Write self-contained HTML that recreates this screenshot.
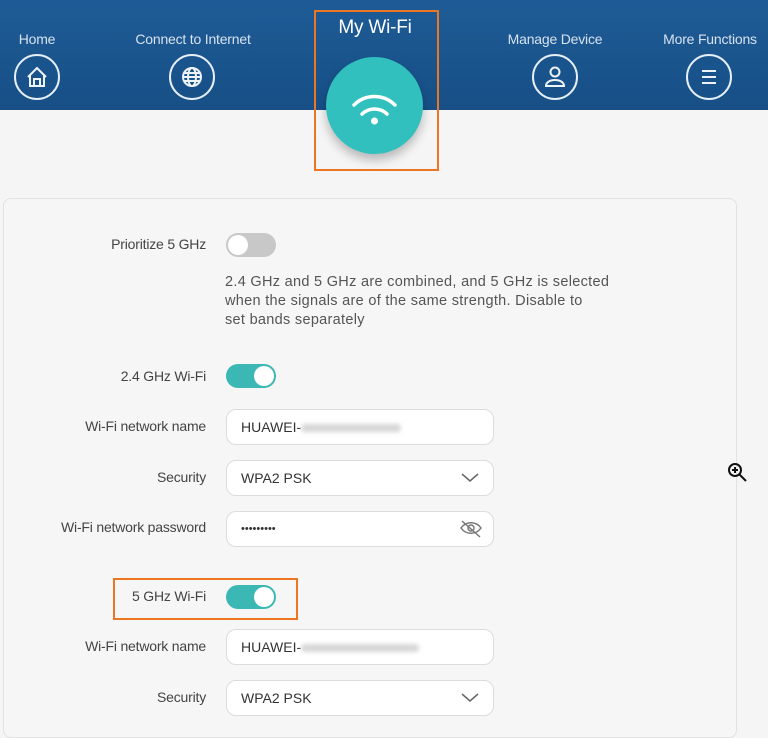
<!DOCTYPE html>
<html><head><style>
*{margin:0;padding:0;box-sizing:border-box}
body{width:768px;height:718px;overflow:hidden;background:#f5f5f5;font-family:"Liberation Sans",sans-serif;position:relative;color:#333}
.hdr{position:absolute;left:0;top:0;width:768px;height:110px;background:linear-gradient(180deg,#1e5b96 0%,#174f86 100%)}
.nl{position:absolute;top:31px;color:#d6e2ee;font-size:14px;white-space:nowrap;transform:translateX(-50%);letter-spacing:-0.2px}
.ni{position:absolute;top:54px;width:46px;height:46px;border:2px solid #e6eef6;border-radius:50%;transform:translateX(-50%)}
.ni svg{position:absolute;left:0;top:0}
.panel{position:absolute;left:3px;top:198px;width:734px;height:540px;border:1.5px solid #e2e2e2;border-radius:8px;background:#f6f6f6}
.lbl{position:absolute;right:562px;font-size:14px;color:#444;white-space:nowrap;letter-spacing:-0.2px}
.tg{position:absolute;left:226px;width:50px;height:24px;border-radius:12px}
.tg i{position:absolute;top:2px;width:20px;height:20px;border-radius:50%;background:#fff}
.off{background:#c8c8c8}.off i{left:2px}
.on{background:#3bb8b4}.on i{right:2px}
.inp{position:absolute;left:226px;width:268px;height:36px;border:1.5px solid #dcdcdc;border-radius:10px;background:#fff;font-size:14px;color:#333;padding:9px 0 0 14px}
.blur{display:inline-block;width:100px;height:8px;background:#d6d6d6;border-radius:4px;vertical-align:middle;filter:blur(2px)}
.box{position:absolute;border:2.5px solid #ec7622}
</style></head><body>
<div class="hdr"></div>
<div class="nl" style="left:37px">Home</div>
<div class="nl" style="left:193px">Connect to Internet</div>
<div class="nl" style="left:555px">Manage Device</div>
<div class="nl" style="left:710px">More Functions</div>
<div class="nl" style="left:375px;top:17px;font-size:19px;color:#fff">My Wi-Fi</div>
<div class="ni" style="left:37px"><svg width="42" height="42" viewBox="0 0 42 42" fill="none" stroke="#eef3f8" stroke-width="2"><path d="M12 21 L21 12 L30 21 M14 19 V30 H28 V19 M18 30 V23 H24 V30"/></svg></div>
<div class="ni" style="left:192px"><svg width="42" height="42" viewBox="0 0 42 42" fill="none" stroke="#eef3f8" stroke-width="2"><circle cx="21" cy="21" r="9"/><ellipse cx="21" cy="21" rx="4" ry="9"/><path d="M12 21H30M13 17H29M13 25H29"/></svg></div>
<div class="ni" style="left:555px"><svg width="42" height="42" viewBox="0 0 42 42" fill="none" stroke="#eef3f8" stroke-width="2"><circle cx="21" cy="16" r="4.5"/><path d="M12 30 C12 22 30 22 30 30 Z"/></svg></div>
<div class="ni" style="left:709px"><svg width="42" height="42" viewBox="0 0 42 42" fill="none" stroke="#eef3f8" stroke-width="2"><path d="M14 15H28M14 21H28M14 27H28"/></svg></div>
<div style="position:absolute;left:326px;top:57px;width:97px;height:97px;border-radius:50%;background:#31c0be;box-shadow:0 6px 10px rgba(0,0,0,.25)">
<svg width="97" height="97" viewBox="0 0 97 97" fill="none" stroke="#fff" stroke-width="3.5" stroke-linecap="round"><path d="M28 48 A29 29 0 0 1 69 48"/><path d="M36 57 A18 18 0 0 1 61 57"/><circle cx="48.5" cy="64" r="3.5" fill="#fff" stroke="none"/></svg></div>
<div class="box" style="left:314px;top:10px;width:125px;height:161px"></div>
<div class="panel"></div>
<div class="lbl" style="top:236px">Prioritize 5 GHz</div>
<div class="tg off" style="top:233px"><i></i></div>
<div style="position:absolute;left:225px;top:273px;font-size:14.5px;line-height:19px;color:#555;white-space:nowrap;letter-spacing:0.3px">2.4 GHz and 5 GHz are combined, and 5 GHz is selected<br>when the signals are of the same strength. Disable to<br>set bands separately</div>
<div class="lbl" style="top:368px">2.4 GHz Wi-Fi</div>
<div class="tg on" style="top:364px"><i></i></div>
<div class="lbl" style="top:418px">Wi-Fi network name</div>
<div class="inp" style="top:409px">HUAWEI-<span class="blur"></span></div>
<div class="lbl" style="top:469px">Security</div>
<div class="inp" style="top:460px">WPA2 PSK<svg style="position:absolute;right:14px;top:12px" width="18" height="10" viewBox="0 0 18 10" fill="none" stroke="#666" stroke-width="1.5"><path d="M1 1L9 8L17 1"/></svg></div>
<div class="lbl" style="top:519px">Wi-Fi network password</div>
<div class="inp" style="top:511px;font-size:11px;padding-top:11px">•••••••••<svg style="position:absolute;right:10px;top:7px" width="24" height="20" viewBox="0 0 24 20" fill="none" stroke="#777" stroke-width="1.5"><path d="M2 9C7 2 17 2 22 9C17 16 7 16 2 9Z"/><circle cx="12" cy="9" r="3"/><path d="M3 2L21 18"/></svg></div>
<div class="box" style="left:113px;top:578px;width:185px;height:42px"></div>
<div class="lbl" style="top:588px">5 GHz Wi-Fi</div>
<div class="tg on" style="top:585px"><i></i></div>
<div class="lbl" style="top:638px">Wi-Fi network name</div>
<div class="inp" style="top:629px">HUAWEI-<span class="blur" style="width:118px"></span></div>
<div class="lbl" style="top:689px">Security</div>
<div class="inp" style="top:680px">WPA2 PSK<svg style="position:absolute;right:14px;top:12px" width="18" height="10" viewBox="0 0 18 10" fill="none" stroke="#666" stroke-width="1.5"><path d="M1 1L9 8L17 1"/></svg></div>
<svg style="position:absolute;left:727px;top:462px" width="22" height="22" viewBox="0 0 22 22" fill="none" stroke="#111" stroke-width="2"><circle cx="8" cy="8" r="6"/><path d="M8 5V11M5 8H11M12.5 12.5L19 19"/></svg>
</body></html>
